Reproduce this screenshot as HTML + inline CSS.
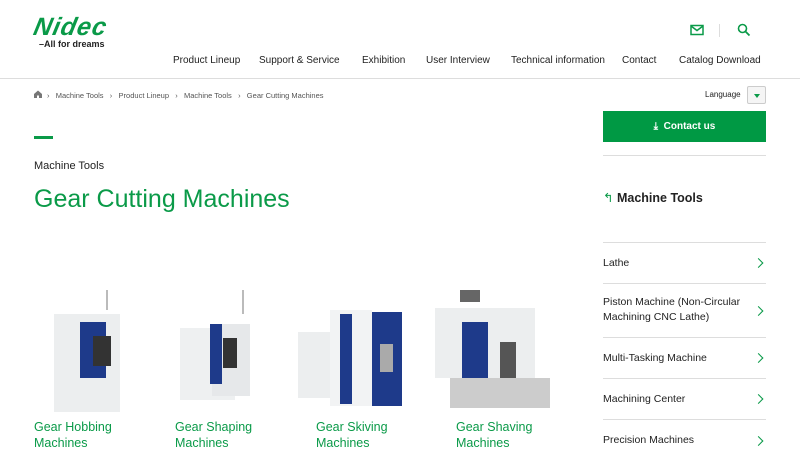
<!DOCTYPE html>
<html><head><meta charset="utf-8"><style>
*{margin:0;padding:0;box-sizing:border-box}
body{width:800px;height:450px;overflow:hidden;background:#fff;font-family:"Liberation Sans",Arial,sans-serif;color:#222;position:relative}
.a{position:absolute}
.nav span{position:absolute;top:55px;font-size:10px;color:#222;white-space:nowrap}
.bc{position:absolute;top:90px;font-size:7.5px;color:#555;white-space:nowrap}
.side{position:absolute;left:603px;width:163px;border-top:1px solid #ddd;font-size:10.5px;color:#222}
.side div{position:relative;border-bottom:1px solid #ddd;padding-right:22px}
.side div:after{content:"";position:absolute;right:4px;top:50%;width:6px;height:6px;border-right:1.5px solid #0a9a48;border-top:1.5px solid #0a9a48;transform:translateY(-50%) rotate(45deg)}
.cap{position:absolute;top:419px;font-size:12.5px;color:#0a9a48;line-height:16px}
</style></head><body>
<div class="a" style="left:34px;top:13px;font:italic 900 25px 'Liberation Sans',sans-serif;color:#0a9a48;letter-spacing:1px;transform:skewX(-12deg)">Nidec</div>
<div class="a" style="left:39px;top:39px;font-size:9px;font-weight:bold;color:#222">–All for dreams</div>
<svg class="a" style="left:690px;top:24px" width="14" height="12" viewBox="0 0 14 12"><rect x="1" y="1.5" width="12" height="9" fill="none" stroke="#0a9a48" stroke-width="1.5"/><path d="M1 2l6 4.5 6-4.5" fill="none" stroke="#0a9a48" stroke-width="1.5"/></svg>
<div class="a" style="left:719px;top:24px;width:1px;height:13px;background:#ddd"></div>
<svg class="a" style="left:737px;top:23px" width="14" height="14" viewBox="0 0 14 14"><circle cx="5.5" cy="5.5" r="4" fill="none" stroke="#0a9a48" stroke-width="1.6"/><path d="M8.5 8.5l4 4" stroke="#0a9a48" stroke-width="1.8"/></svg>
<div class="nav"><span style="left:173px">Product Lineup</span><span style="left:259px">Support &amp; Service</span><span style="left:362px">Exhibition</span><span style="left:426px">User Interview</span><span style="left:511px">Technical information</span><span style="left:622px">Contact</span><span style="left:679px">Catalog Download</span></div>
<div class="a" style="left:0;top:78px;width:800px;height:1px;background:#ddd"></div>
<svg class="a" style="left:34px;top:90px" width="8" height="8" viewBox="0 0 8 8"><path d="M0 4L4 0.5 8 4V8H5V5.5H3V8H0Z" fill="#777"/></svg>
<div class="bc" style="left:47px;top:91px">›&nbsp;&nbsp; Machine Tools &nbsp;&nbsp;›&nbsp;&nbsp; Product Lineup &nbsp;&nbsp;›&nbsp;&nbsp; Machine Tools &nbsp;&nbsp;›&nbsp;&nbsp; Gear Cutting Machines</div>
<div class="a" style="left:705px;top:90px;font-size:8px;color:#222">Language</div>
<div class="a" style="left:747px;top:86px;width:19px;height:18px;border:1px solid #ccc;background:#f5f5f5;border-radius:2px"><div style="position:absolute;left:6px;top:7px;border-left:3px solid transparent;border-right:3px solid transparent;border-top:4px solid #0a9a48"></div></div>
<div class="a" style="left:603px;top:111px;width:163px;height:31px;background:#009944;color:#fff;font-size:10px;font-weight:bold;text-align:center;line-height:31px">⤓&nbsp; Contact us</div>
<div class="a" style="left:603px;top:155px;width:163px;height:1px;background:#ddd"></div>
<div class="a" style="left:603px;top:190px;font-size:12.5px;font-weight:bold;color:#222"><span style="color:#0a9a48;font-weight:normal">↰</span> Machine Tools</div>
<div class="side" style="top:242px">
<div style="height:41px;line-height:40px">Lathe</div>
<div style="height:54px;padding-top:11px;line-height:15px">Piston Machine (Non-Circular Machining CNC Lathe)</div>
<div style="height:41px;line-height:40px">Multi-Tasking Machine</div>
<div style="height:41px;line-height:40px">Machining Center</div>
<div style="height:41px;line-height:40px;border-bottom:none">Precision Machines</div>
</div>
<div class="a" style="left:34px;top:136px;width:19px;height:3px;background:#0a9a48"></div>
<div class="a" style="left:34px;top:160px;font-size:11px;color:#222">Machine Tools</div>
<div class="a" style="left:34px;top:185px;font-size:25px;color:#0a9a48">Gear Cutting Machines</div>
<svg class="a" style="left:30px;top:288px" width="560" height="125" viewBox="0 0 560 125">
<g><rect x="24" y="26" width="66" height="98" fill="#eceeef"/><rect x="50" y="34" width="26" height="56" fill="#1e3a8a"/><rect x="63" y="48" width="18" height="30" fill="#333"/><rect x="76" y="2" width="2" height="20" fill="#bbb"/></g>
<g><rect x="150" y="40" width="55" height="72" fill="#eef0f1"/><rect x="182" y="36" width="38" height="72" fill="#e6e8ea"/><rect x="180" y="36" width="12" height="60" fill="#1e3a8a"/><rect x="193" y="50" width="14" height="30" fill="#333"/><rect x="212" y="2" width="2" height="24" fill="#bbb"/></g>
<g><rect x="268" y="44" width="40" height="66" fill="#eceeef"/><rect x="300" y="22" width="42" height="96" fill="#f2f3f4"/><rect x="310" y="26" width="12" height="90" fill="#1e3a8a"/><rect x="342" y="24" width="30" height="94" fill="#1e3a8a"/><rect x="350" y="56" width="13" height="28" fill="#aaa"/></g>
<g><rect x="405" y="20" width="100" height="70" fill="#eceeef"/><rect x="432" y="34" width="26" height="56" fill="#1e3a8a"/><rect x="470" y="54" width="16" height="40" fill="#555"/><rect x="420" y="90" width="100" height="30" fill="#ccc"/><rect x="430" y="2" width="20" height="12" fill="#666"/></g>
</svg>
<div class="cap" style="left:34px">Gear Hobbing<br>Machines</div>
<div class="cap" style="left:175px">Gear Shaping<br>Machines</div>
<div class="cap" style="left:316px">Gear Skiving<br>Machines</div>
<div class="cap" style="left:456px">Gear Shaving<br>Machines</div>
</body></html>
